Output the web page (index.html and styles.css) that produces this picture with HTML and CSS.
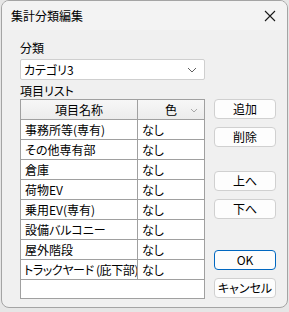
FILE: index.html
```html
<!DOCTYPE html>
<html lang="ja">
<head>
    <meta charset="UTF-8">
    <meta name="viewport" content="width=device-width, initial-scale=1.0">
    <title>集計分類編集</title>
    <link rel="stylesheet" href="styles.css">
</head>
<body>
    <div class="window">
        <div class="title-bar">
            <span class="title">集計分類編集</span>
            <svg class="close" width="12" height="12" viewBox="0 0 12 12">
                <path d="M1 1 L11 11 M11 1 L1 11" stroke="#1a1a1a" stroke-width="1.1" fill="none"/>
            </svg>
        </div>

        <div class="content">
            <div class="label">分類</div>
            <div class="combo">
                <span>カテゴリ3</span>
                <svg class="chevron" width="10" height="6" viewBox="0 0 10 6">
                    <path d="M1 1 L5 5 L9 1" stroke="#606060" stroke-width="1" fill="none"/>
                </svg>
            </div>
            <div class="label list-label">項目リスト</div>

            <div class="main">
                <div class="list">
                    <div class="row head">
                        <div class="cell name">項目名称</div>
                        <div class="cell color">色
                            <svg class="sort" width="8" height="5" viewBox="0 0 8 5">
                                <path d="M1 1 L4 4 L7 1" stroke="#a8a8a8" stroke-width="1" fill="none"/>
                            </svg>
                        </div>
                    </div>
                    <div class="row"><div class="cell name">事務所等(専有)</div><div class="cell color">なし</div></div>
                    <div class="row"><div class="cell name">その他専有部</div><div class="cell color">なし</div></div>
                    <div class="row"><div class="cell name">倉庫</div><div class="cell color">なし</div></div>
                    <div class="row"><div class="cell name">荷物EV</div><div class="cell color">なし</div></div>
                    <div class="row"><div class="cell name">乗用EV(専有)</div><div class="cell color">なし</div></div>
                    <div class="row"><div class="cell name">設備バルコニー</div><div class="cell color">なし</div></div>
                    <div class="row"><div class="cell name">屋外階段</div><div class="cell color">なし</div></div>
                    <div class="row"><div class="cell name tight">トラックヤード (庇下部)</div><div class="cell color">なし</div></div>
                </div>

                <div class="buttons">
                    <button>追加</button>
                    <button class="near">削除</button>
                    <button class="far">上へ</button>
                    <button class="near">下へ</button>
                    <button class="ok">OK</button>
                    <button class="near">キャンセル</button>
                </div>
            </div>
        </div>
    </div>
</body>
</html>
```

FILE: styles.css
```css
* {
    margin: 0;
    padding: 0;
    box-sizing: border-box;
}

body {
    background: #e6e6e6;
    font-family: "Noto Sans CJK JP", "Noto Sans", sans-serif;
    font-size: 12px;
    font-feature-settings: "palt";
    color: #000;
}

.window {
    width: 287px;
    height: 308px;
    margin-left: 1px;
    background: #f0f0f0;
    border: 1px solid #a4a4a4;
    border-radius: 8px;
    overflow: hidden;
}

.title-bar {
    height: 29px;
    background: #f3f3f3;
    display: flex;
    align-items: center;
    justify-content: space-between;
    padding: 0 11px 0 9px;
}

.title {
    font-size: 12px;
    line-height: 16px;
}

.content {
    padding: 10px 10px 0 18px;
}

.label {
    line-height: 16px;
    height: 16px;
}

.combo {
    width: 185px;
    height: 21px;
    margin-top: 3px;
    background: #fff;
    border: 1px solid #cfcfcf;
    border-radius: 2px;
    display: flex;
    align-items: center;
    justify-content: space-between;
    padding: 0 7px 0 3px;
    line-height: 16px;
}

.list-label {
    margin-top: 3px;
}

.main {
    display: flex;
    gap: 9px;
}

.list {
    width: 185px;
    height: 200px;
    background: #fff;
    border: 1px solid #a0a0a0;
}

.row {
    display: flex;
    height: 20px;
    border-bottom: 1px solid #a0a0a0;
}

.cell {
    line-height: 19px;
    padding-left: 4px;
    white-space: nowrap;
    overflow: hidden;
}

.name {
    width: 117px;
    border-right: 1px solid #a0a0a0;
}

.tight {
    padding-left: 3px;
    letter-spacing: -0.4px;
}

.color {
    flex: 1;
}

.head {
    background: linear-gradient(#f7f7f7, #ececec);
}

.head .cell {
    text-align: center;
    padding-left: 0;
}

.head .color {
    position: relative;
}

.sort {
    position: absolute;
    right: 6px;
    top: 8px;
}

.buttons {
    display: flex;
    flex-direction: column;
}

button {
    width: 62px;
    height: 20px;
    font-family: inherit;
    font-size: 12px;
    font-feature-settings: "palt";
    line-height: 16px;
    color: #000;
    background: #fdfdfd;
    border: 1px solid #d0d0d0;
    border-radius: 4px;
}

.near {
    margin-top: 8px;
}

.far {
    margin-top: 24px;
}

.ok {
    margin-top: 31px;
    border: 1px solid #0067c0;
}
```
